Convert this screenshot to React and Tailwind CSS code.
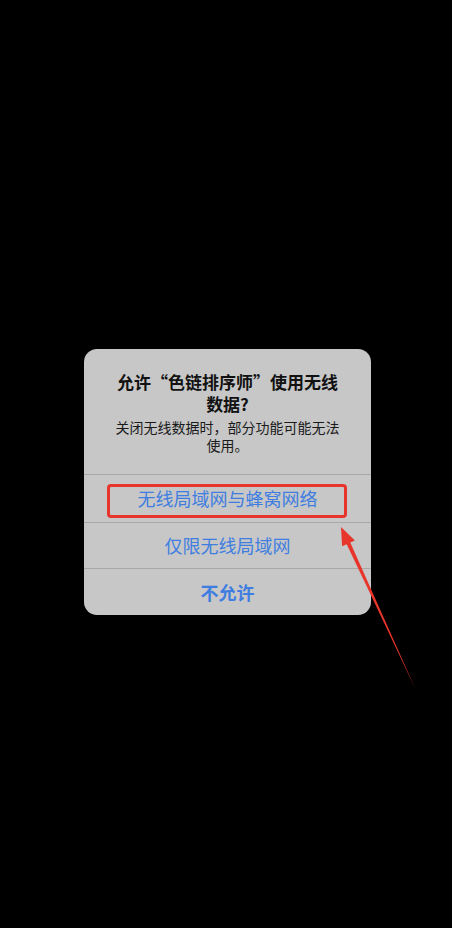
import React from "react";

export default function App() {
  const font = { fontFamily: '"Noto Sans CJK SC", "Noto Sans", sans-serif' };
  return (
    <div className="relative w-[452px] h-[928px] bg-black overflow-hidden" style={font}>
      <div className="pt-[349px] pl-[84px]">
        <div className="w-[287px] rounded-[13px] bg-[#c7c7c7] overflow-hidden">
          <div className="pt-[22px] pb-[20px] px-[12px] text-center">
            <div className="text-[17px] leading-[22px] font-semibold text-[#111]">
              <div>允许“色链排序师”使用无线</div>
              <div>数据?</div>
            </div>
            <div className="mt-[3px] text-[14px] leading-[18px] text-[#1a1a1a]">
              <div>关闭无线数据时，部分功能可能无法</div>
              <div>使用。</div>
            </div>
          </div>
          <div className="border-t border-[#a8a8a8] h-[48px] flex items-center justify-center text-[18px] text-[#3f7ee0]">
            无线局域网与蜂窝网络
          </div>
          <div className="border-t border-[#a8a8a8] h-[46px] flex items-center justify-center text-[18px] text-[#3f7ee0]">
            仅限无线局域网
          </div>
          <div className="border-t border-[#a8a8a8] h-[47px] flex items-center justify-center text-[18px] font-semibold text-[#3f7ee0]">
            不允许
          </div>
        </div>
      </div>

      <div className="absolute left-[107px] top-[484px] w-[240px] h-[34px] border-[3px] border-[#e8352b] rounded-[4px]" />

      <svg className="absolute left-0 top-0" width="452" height="928" viewBox="0 0 452 928">
        <polygon points="341,527 354.9,540.4 350.3,542.5 415,688 346.7,544.2 342.1,546.3" fill="#e8352b" />
      </svg>
    </div>
  );
}
